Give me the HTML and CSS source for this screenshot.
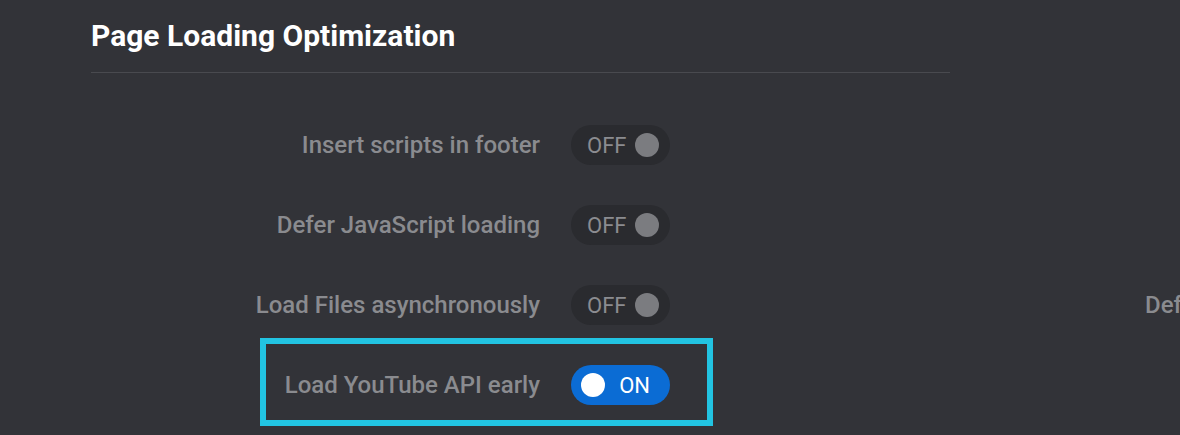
FILE: index.html
```html
<!DOCTYPE html>
<html>
<head>
<meta charset="utf-8">
<link rel="stylesheet" href="styles.css">
</head>
<body>
<div class="page">
  <h1 class="title">Page Loading Optimization</h1>
  <div class="divider"></div>
  <div class="rows">
    <div class="row">
      <span class="label">Insert scripts in footer</span>
      <span class="toggle off"><span class="state">OFF</span><span class="knob"></span></span>
    </div>
    <div class="side"></div>
    <div class="row">
      <span class="label">Defer JavaScript loading</span>
      <span class="toggle off"><span class="state">OFF</span><span class="knob"></span></span>
    </div>
    <div class="side"></div>
    <div class="row">
      <span class="label">Load Files asynchronously</span>
      <span class="toggle off"><span class="state">OFF</span><span class="knob"></span></span>
    </div>
    <div class="side"><span class="label">Defer CSS loading</span></div>
    <div class="row highlight">
      <span class="label">Load YouTube API early</span>
      <span class="toggle on"><span class="knob"></span><span class="state">ON</span></span>
    </div>
    <div class="side"></div>
  </div>
</div>
</body>
</html>
```
FILE: styles.css
```css
html, body {
  margin: 0;
  padding: 0;
  background: #323338;
  overflow: hidden;
}
body {
  width: 1180px;
  height: 435px;
  font-family: Roboto, "Liberation Sans", sans-serif;
}
.page {
  padding-top: 16px;
}
.title {
  margin: 0 0 0 91px;
  font-size: 30px;
  font-weight: 700;
  color: #ffffff;
  line-height: 40px;
}
.divider {
  margin: 16px 0 0 91px;
  width: 859px;
  height: 1px;
  background: #494a4f;
}
.rows {
  margin-top: 32px;
  margin-left: 260px;
  display: grid;
  grid-template-columns: 453px 1fr;
  column-gap: 432px;
}
.row {
  position: relative;
  height: 80px;
  box-sizing: border-box;
  display: flex;
  align-items: center;
  justify-content: flex-end;
  gap: 31px;
  padding-right: 43px;
}
.side {
  height: 80px;
  display: flex;
  align-items: center;
  white-space: nowrap;
}
.label {
  flex-shrink: 0;
  font-size: 24px;
  font-weight: 500;
  color: #8a8b8f;
  white-space: nowrap;
}
.toggle {
  flex-shrink: 0;
  width: 99px;
  height: 40px;
  border-radius: 20px;
  box-sizing: border-box;
  display: flex;
  align-items: center;
}
.toggle.off {
  background: #2a2b2f;
  padding: 0 11px 0 16px;
  justify-content: space-between;
}
.toggle.on {
  background: #0b6cd4;
  padding: 0 20px 0 10px;
  justify-content: space-between;
}
.state {
  font-size: 22px;
}
.off .state {
  color: #8b8c90;
}
.on .state {
  color: #ffffff;
}
.knob {
  width: 24px;
  height: 24px;
  border-radius: 50%;
}
.off .knob {
  background: #7b7c80;
}
.on .knob {
  background: #ffffff;
}
.highlight::before {
  content: "";
  position: absolute;
  left: 0;
  right: 0;
  top: -7px;
  bottom: -1px;
  border: 6px solid #22c4e2;
}
```
